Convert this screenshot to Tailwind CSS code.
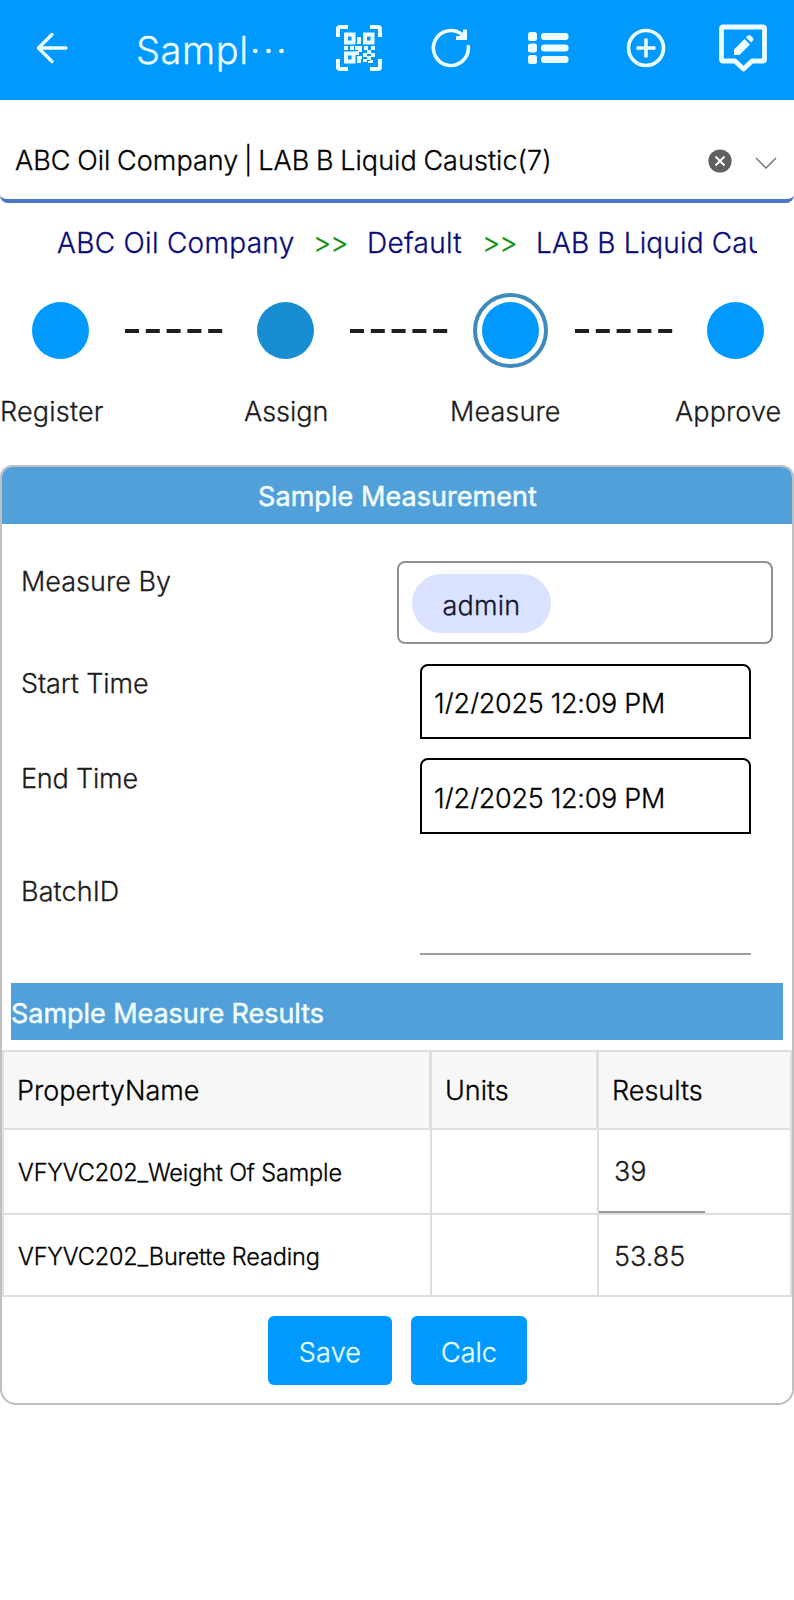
<!DOCTYPE html>
<html lang="en">
<head>
<meta charset="utf-8">
<title>Sample Measurement</title>
<script src="https://cdn.jsdelivr.net/npm/@tailwindcss/browser@4"></script>
</head>
<body class="w-[794px] h-[1600px] overflow-hidden bg-white font-['Inter',sans-serif] font-light [-webkit-text-stroke:0.3px_currentColor] text-[27px] leading-8 text-[#1c1c1e] whitespace-nowrap">

<header class="h-[100px] bg-[#0099ff] text-[#eefdff] flex items-center">
  <svg class="ml-[36px] w-[32px] h-[32px] mb-[5px]" viewBox="0 0 32 32" fill="none" stroke="currentColor" stroke-width="3.4"><path stroke-linecap="round" stroke-linejoin="round" d="M30 16H4M16 2.500 2.500 16 16 29.500"/></svg>
  <h1 class="ml-[68px] w-[160px] text-[38px] leading-[48px] tracking-[0.6px]">Sampl<span class="ml-px tracking-[2.4px]">···</span></h1>
  <svg class="ml-[40px] w-[46px] h-[46px] mb-[4px]" viewBox="0 0 46 46" fill="none" stroke="currentColor" stroke-width="4">
    <path d="M2 12V4q0-2 2-2h8M34 2h8q2 0 2 2v8M44 34v8q0 2-2 2h-8M12 44H4q-2 0-2-2v-8"/>
    <path d="M10 9.500h7.500v8H10zM29 9.500h7.500v8H29zM10 28.500h7.500v8H10z"/>
    <path fill="currentColor" stroke="none" d="M21 12h4v7h-4zM8 21h4v4H8zM14 21h4v4h-4zM19 21h7v6h-3v3h-4v-4h3v-1h-3zM28 21h4v4h-4zM35 21h4v4h-4zM31 25h4v4h-4zM27 28h4v4h-4zM35 28h4v4h-4zM21 31h5v3h-1v4h-4zM31 31h4v4h-4zM27 34h4v3h-4zM34 35h3v3h-5v-2h2z"/>
  </svg>
  <svg class="ml-[49px] w-[40px] h-[40px] mb-[4px]" viewBox="0 0 40 40" fill="none" stroke="currentColor" stroke-width="3.6"><path stroke-linecap="round" d="M37.300 18.500A17.500 17.500 0 1 1 31 6.500"/><path d="M34 1.500v8.500H25" stroke-width="4"/><path d="M29 8l5-5v6z" fill="currentColor" stroke="none"/></svg>
  <svg class="ml-[56px] w-[42px] h-[34px] mb-[5px]" viewBox="0 0 42 34" fill="currentColor"><rect x="1" y="1" width="9" height="9" rx="2.500"/><rect x="1" y="12.500" width="9" height="9" rx="2.500"/><rect x="1" y="24" width="9" height="9" rx="2.500"/><rect x="14" y="2" width="27.500" height="7" rx="3"/><rect x="14" y="13.500" width="27.500" height="7" rx="3"/><rect x="14" y="25" width="27.500" height="7" rx="3"/></svg>
  <svg class="ml-[57px] w-[40px] h-[40px] mb-[4px]" viewBox="0 0 40 40" fill="none" stroke="currentColor" stroke-width="3.600"><circle cx="20" cy="20" r="17.500"/><path d="M20 10.500v19M10.500 20h19"/></svg>
  <svg class="ml-[53px] w-[48px] h-[48px] mb-[5px]" viewBox="0 0 48 48" fill="none" stroke="currentColor" stroke-width="4.800" stroke-linejoin="round"><path d="M4 3h40q1.500 0 1.500 1.500v31q0 1.500-1.500 1.500H33l-8.500 8L16 37H4q-1.500 0-1.500-1.500v-31Q2.500 3 4 3z"/><path fill="currentColor" stroke="none" d="M15 31v-5.500L25.500 15l5.500 5.500L20.500 31zM27 13.500l2-2q1.200-1.200 2.500 0l2.500 2.500q1.200 1.200 0 2.500l-2 2z"/></svg>
</header>

<div class="h-[103px] border-b-4 border-[#4a76c9] rounded-b-[8px] flex items-center pl-[15px] pt-[23px] text-black">
  <span class="w-[693px] [word-spacing:-1px] tracking-[0.05px]">ABC Oil Company<span class="-mx-[1px]"> | </span>LAB B Liquid Caustic(7)</span>
  <svg class="w-[24px] h-[24px] mb-[1px]" viewBox="0 0 24 24"><circle cx="12" cy="12" r="11.600" fill="#606060"/><path d="M7.500 7.500l9 9M16.500 7.500l-9 9" stroke="#fff" stroke-width="2"/></svg>
  <svg class="ml-[23px] mt-[4px] w-[22px] h-[12px]" viewBox="0 0 22 12" fill="none" stroke="#777" stroke-width="1.500"><path d="M1 1l10 10L21 1"/></svg>
</div>

<nav class="ml-[57px] w-[700px] h-[80px] overflow-hidden flex items-center text-[28px] tracking-[0.3px] text-[#0a0a78] *:shrink-0">
  <span class="w-[256px]">ABC Oil Company</span>
  <span class="w-[54px] text-[#0a8f0a] tracking-[-1px]">&gt;&gt;</span>
  <span class="w-[115px]">Default</span>
  <span class="w-[54px] text-[#0a8f0a] tracking-[-1px]">&gt;&gt;</span>
  <span class="tracking-[0.15px]">LAB B Liquid Caustic</span>
</nav>

<section class="h-[182px]">
  <div class="h-[95px] flex items-center pl-[32px]">
    <div class="size-[57px] rounded-full bg-[#0099ff]"></div>
    <svg class="ml-[36px] w-[98px] h-1" viewBox="0 0 98 4"><path d="M0 2h98" stroke="#1f1f1f" stroke-width="4" stroke-dasharray="14 6.800"/></svg>
    <div class="ml-[34px] size-[57px] rounded-full bg-[#188dd1]"></div>
    <svg class="ml-[36px] w-[98px] h-1" viewBox="0 0 98 4"><path d="M0 2h98" stroke="#1f1f1f" stroke-width="4" stroke-dasharray="14 6.800"/></svg>
    <div class="ml-[25px] size-[75px] rounded-full border-4 border-[#3d8abd] p-[5px]"><div class="size-full rounded-full bg-[#0099ff]"></div></div>
    <svg class="ml-[27px] w-[98px] h-1" viewBox="0 0 98 4"><path d="M0 2h98" stroke="#1f1f1f" stroke-width="4" stroke-dasharray="14 6.800"/></svg>
    <div class="ml-[34px] size-[57px] rounded-full bg-[#0099ff]"></div>
  </div>
  <div class="flex pt-[18px]">
    <span class="w-[244px] tracking-[0.2px]">Register</span>
    <span class="w-[206px]">Assign</span>
    <span class="w-[225px] tracking-[0.1px]">Measure</span>
    <span class="tracking-[0.1px]">Approve</span>
  </div>
</section>

<main class="h-[940px] border-2 border-[#c0c0c0] rounded-t-[12px] rounded-b-[16px] overflow-hidden">
  <h2 class="h-[57px] bg-[#51a0d9] text-[#f2fdff] font-normal [-webkit-text-stroke:0.5px_currentColor] flex items-center justify-center pt-[2px] pl-px tracking-[0.05px]">Sample Measurement</h2>

  <div class="h-[140px] pt-[37px] pl-[19px] flex">
    <label class="w-[376px] pt-[5px]">Measure By</label>
    <div class="w-[376px] h-[83px] border-2 border-[#919191] rounded-[8px] pl-[13px] pt-[11px]">
      <div class="w-[139px] h-[59px] rounded-full bg-[#dae2ff] flex items-center justify-center pt-[4px] tracking-[0.2px] text-[#15152e]">admin</div>
    </div>
  </div>
  <div class="h-[94px] pl-[19px] flex">
    <label class="w-[399px] pt-[4px] tracking-[-0.1px]">Start Time</label>
    <div class="w-[331px] h-[75px] border-2 border-black rounded-t-[8px] pl-[12px] pt-[22px] text-black tracking-[-0.3px]"><div class="h-[26px] overflow-hidden">1/2/2025 12:09 PM</div></div>
  </div>
  <div class="h-[94px] pl-[19px] flex">
    <label class="w-[399px] pt-[5px] tracking-[-0.2px]">End Time</label>
    <div class="w-[331px] h-[76px] border-2 border-black rounded-t-[8px] pl-[12px] pt-[23px] text-black tracking-[-0.3px]"><div class="h-[26px] overflow-hidden">1/2/2025 12:09 PM</div></div>
  </div>
  <div class="h-[131px] pl-[19px] flex">
    <label class="w-[399px] pt-[24px] tracking-[0.1px]">BatchID</label>
    <div class="w-[331px] h-[103px] border-b-2 border-[#9c9c9c]"></div>
  </div>

  <h3 class="mx-[9px] h-[57px] bg-[#51a0d9] text-[#f2fdff] font-normal [-webkit-text-stroke:0.5px_currentColor] flex items-center pt-[4px] tracking-[-0.05px]">Sample Measure Results</h3>

  <div class="mt-[10px] border-2 border-[#dedede] grid grid-cols-[428px_167px_1fr] text-black">
    <div class="h-[78px] bg-[#f7f7f7] border-b-2 border-r-3 border-[#dedede] flex items-center pl-[13px] pt-[2px]">PropertyName</div>
    <div class="h-[78px] bg-[#f7f7f7] border-b-2 border-r-3 border-[#dedede] flex items-center pl-[13px] pt-[2px]">Units</div>
    <div class="h-[78px] bg-[#f7f7f7] border-b-2 border-[#dedede] flex items-center pl-[13px] pt-[2px]">Results</div>
    <div class="h-[85px] border-b-2 border-r-2 border-[#dedede] flex items-center pl-[14px] pt-[3px] text-[23.5px] tracking-[-0.15px]">VFYVC202_Weight Of Sample</div>
    <div class="h-[85px] border-b-2 border-r-2 border-[#dedede]"></div>
    <div class="h-[85px] border-b-2 border-[#dedede] text-[#1c1c1e]"><div class="w-[106px] h-[83px] border-b-2 border-[#999] flex items-center pl-[15px] pt-[2px]">39</div></div>
    <div class="h-[80px] border-r-2 border-[#dedede] flex items-center pl-[14px] pt-[4px] text-[23.5px] tracking-[-0.15px]">VFYVC202_Burette Reading</div>
    <div class="h-[80px] border-r-2 border-[#dedede]"></div>
    <div class="h-[80px] flex items-center pl-[15px] pt-[3px] text-[#1c1c1e]">53.85</div>
  </div>

  <div class="mt-[19px] ml-[266px] flex gap-[19px] text-[#eaffff]">
    <button class="w-[124px] h-[69px] rounded-[6px] bg-[#0099ff] pt-[4px] tracking-[0.2px]">Save</button>
    <button class="w-[116px] h-[69px] rounded-[6px] bg-[#0099ff] pt-[4px]">Calc</button>
  </div>
</main>
</body>
</html>
